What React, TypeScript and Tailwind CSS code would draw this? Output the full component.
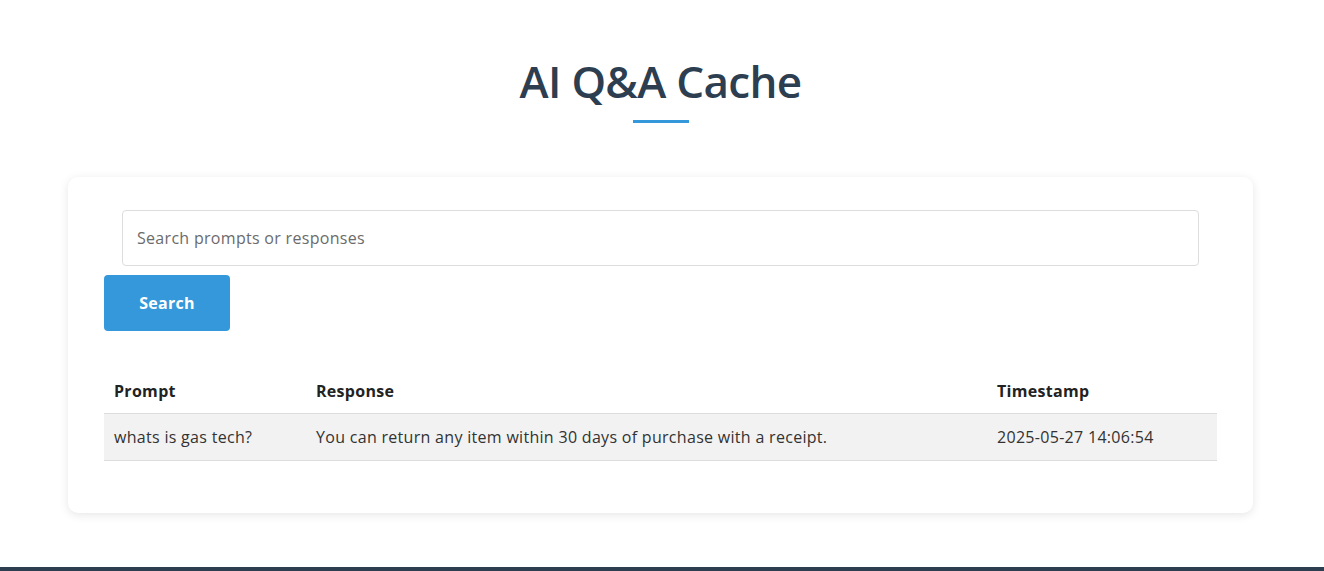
export default function App() {
  const rows = [
    {
      prompt: 'whats is gas tech?',
      response: 'You can return any item within 30 days of purchase with a receipt.',
      timestamp: '2025-05-27 14:06:54',
    },
  ];

  return (
    <div className="min-h-screen bg-white font-['Open_Sans',sans-serif] text-[#333] flex flex-col">
      {/* header shadow */}
      <div className="h-0 shadow-[0_1px_7px_rgba(0,0,0,0.2)]" />

      <main className="flex-1 pl-[68px] pr-[71px] pb-[54px]">
        <div className="text-center pt-[52px]">
          <h1 className="text-[44px] leading-[58px] tracking-[-0.7px] font-semibold text-[#2c3e50]">AI Q&amp;A Cache</h1>
          <div className="mx-auto mt-[10px] w-[56px] h-[3px] bg-[#3498db]" />
        </div>

        <div className="mt-[54px] bg-white rounded-[10px] shadow-[0_2px_10px_rgba(0,0,0,0.1)] px-[36px] pt-[33px] pb-[52px] tracking-[0.3px]">
          <input
            type="text"
            placeholder="Search prompts or responses"
            className="block mx-[18px] w-[calc(100%-36px)] h-[56px] px-[14px] border border-[#ddd] rounded-[4px] text-[16px] placeholder:text-[#6b6b6b] outline-none"
          />
          <button className="mt-[9px] w-[126px] h-[56px] rounded-[4px] bg-[#3498db] text-white text-[16px] font-bold">
            Search
          </button>

          <table className="mt-[39px] w-full border-collapse text-[16px] leading-[20px] text-left">
            <thead>
              <tr className="border-b border-[#ddd]">
                <th className="w-[202px] px-[10px] pt-[11px] pb-[12px] font-bold text-[#222]">Prompt</th>
                <th className="px-[10px] pt-[11px] pb-[12px] font-bold text-[#222]">Response</th>
                <th className="w-[230px] px-[10px] pt-[11px] pb-[12px] font-bold text-[#222]">Timestamp</th>
              </tr>
            </thead>
            <tbody>
              {rows.map((r, i) => (
                <tr key={i} className="bg-[#f2f2f2] border-b border-[#ddd]">
                  <td className="px-[10px] py-[13px] text-[#333]">{r.prompt}</td>
                  <td className="px-[10px] py-[13px] text-[#333]">{r.response}</td>
                  <td className="px-[10px] py-[13px] text-[#333]">{r.timestamp}</td>
                </tr>
              ))}
            </tbody>
          </table>
        </div>
      </main>

      <footer className="h-[40px] bg-[#2c3e50]" />
    </div>
  );
}
